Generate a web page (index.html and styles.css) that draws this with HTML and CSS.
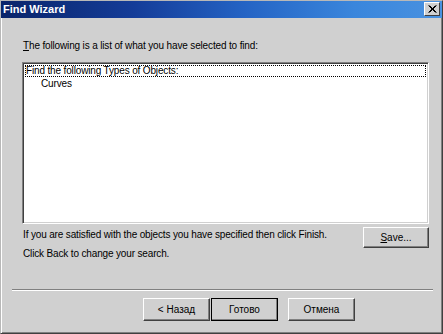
FILE: index.html
```html
<!DOCTYPE html>
<html lang="en">
<head>
  <meta charset="UTF-8" />
  <meta name="viewport" content="width=device-width, initial-scale=1" />
  <link rel="stylesheet" href="styles.css">
</head>
<body>

  <div class="window">
    <div class="title-bar">
      <span class="title">Find Wizard</span>
      <div class="close-btn">
        <svg width="9" height="8" viewBox="0 0 9 8">
          <path d="M0.5 0.5 L7.5 7.5 M1.5 0.5 L8.5 7.5 M7.5 0.5 L0.5 7.5 M8.5 0.5 L1.5 7.5" stroke="#000" stroke-width="1" fill="none"/>
        </svg>
      </div>
    </div>

    <div class="content">
      <div class="label"><u>T</u>he following is a list of what you have selected to find:</div>

      <div class="listbox">
        <div class="list-item selected">Find the following Types of Objects:</div>
        <div class="list-item child">Curves</div>
      </div>

      <div class="info-row">
        <div class="info-text">
          <div>If you are satisfied with the objects you have specified then click Finish.</div>
          <div>Click Back to change your search.</div>
        </div>
        <button class="btn save-btn"><u>S</u>ave...</button>
      </div>
    </div>

    <div class="separator"></div>

    <div class="buttons">
      <button class="btn">&lt; Назад</button>
      <button class="btn default">Готово</button>
      <button class="btn cancel">Отмена</button>
    </div>
  </div>

</body>
</html>
```

FILE: styles.css
```css
body {
  margin: 0;
  font-family: "Liberation Sans", Arial, sans-serif;
  font-size: 10px;
  letter-spacing: -0.15px;
  color: #000;
  background-color: #d0d0d0;
}

.window {
  width: 443px;
  height: 334px;
  box-sizing: border-box;
  background-color: #d0d0d0;
  border: 1px solid #b8b8b8;
  border-right-color: #404040;
  border-bottom-color: #404040;
  box-shadow: inset 1px 1px 0 #fff, inset -1px -1px 0 #808080;
  display: flex;
  flex-direction: column;
  overflow: hidden;
}

.title-bar {
  height: 18px;
  flex-shrink: 0;
  margin: -1px -1px 0 -1px;
  background: linear-gradient(to right, #0a246a 0%, #143c98 30%, #2463c4 55%, #3a86dc 80%, #4a92e0 100%);
  display: flex;
  align-items: center;
  justify-content: space-between;
  padding: 0 3px 0 3px;
}

.title {
  color: #fff;
  font-weight: bold;
  font-size: 11px;
  letter-spacing: 0;
}

.close-btn {
  width: 16px;
  height: 14px;
  box-sizing: border-box;
  background-color: #d0d0d0;
  border: 1px solid #fff;
  border-right-color: #404040;
  border-bottom-color: #404040;
  display: flex;
  align-items: center;
  justify-content: center;
}

.content {
  flex: 1;
  padding: 0 13px 0 21px;
}

.label {
  margin-top: 21px;
  height: 14px;
  line-height: 14px;
  padding-left: 1px;
}

.listbox {
  margin-top: 9px;
  height: 162px;
  box-sizing: border-box;
  background-color: #fff;
  border: 1px solid #808080;
  border-right-color: #fff;
  border-bottom-color: #fff;
  box-shadow: inset 1px 1px 0 #404040, inset -1px -1px 0 #d0d0d0;
  padding: 2px;
}

.list-item {
  height: 12px;
  line-height: 12px;
  white-space: nowrap;
}

.list-item.selected {
  outline: 1px dotted #000;
  outline-offset: -1px;
  padding: 0 1px;
}

.list-item.child {
  padding-left: 16px;
  margin-top: 1px;
}

.info-row {
  display: flex;
  justify-content: space-between;
  align-items: flex-start;
  margin-top: 1px;
}

.info-text {
  padding-top: 0;
  padding-left: 1px;
  line-height: 19px;
  white-space: nowrap;
}

.btn {
  font-family: "Liberation Sans", Arial, sans-serif;
  font-size: 10px;
  color: #000;
  background-color: #d0d0d0;
  border: 1px solid #fff;
  border-right-color: #404040;
  border-bottom-color: #404040;
  box-shadow: inset -1px -1px 0 #808080;
  width: 67px;
  height: 23px;
  padding: 0;
}

.save-btn {
  width: 66px;
  height: 21px;
  margin-top: 2px;
}

.separator {
  flex-shrink: 0;
  margin: 0 9px 0 11px;
  height: 0;
  border-top: 1px solid #808080;
  border-bottom: 1px solid #fff;
}

.buttons {
  flex-shrink: 0;
  display: flex;
  justify-content: flex-end;
  padding-right: 87px;
  margin-top: 7px;
  margin-bottom: 12px;
}

.btn.default {
  outline: 1px solid #000;
  outline-offset: -1px;
  margin-left: 1px;
}

.btn.cancel {
  margin-left: 10px;
}
```
